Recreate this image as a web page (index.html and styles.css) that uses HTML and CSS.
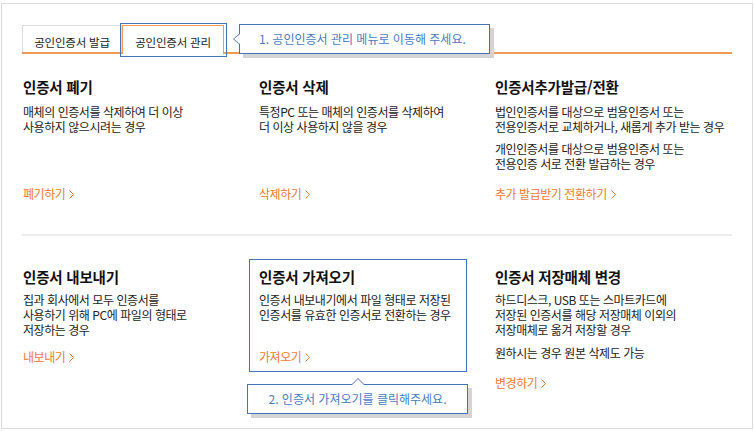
FILE: index.html
```html
<!DOCTYPE html>
<html lang="ko">
<head>
<meta charset="utf-8">
<title>공인인증서 관리</title>
<link rel="stylesheet" href="styles.css">
</head>
<body>
<div class="frame">
  <div class="tabs">
    <div class="tab tab-1">공인인증서 발급</div>
    <div class="tab tab-active">공인인증서 관리</div>
    <div class="callout callout-left">1. 공인인증서 관리 메뉴로 이동해 주세요.</div>
  </div>

  <div class="row row-1">
    <div class="card">
      <h3>인증서 폐기</h3>
      <p>매체의 인증서를 삭제하여 더 이상<br>사용하지 않으시려는 경우</p>
      <div class="link"><a href="#">폐기하기</a><svg width="5" height="9" viewBox="0 0 5 9"><polyline points="0.5,0.5 4.5,4.5 0.5,8.5" fill="none" stroke="#ee7a2f" stroke-width="1"/></svg></div>
    </div>
    <div class="card">
      <h3>인증서 삭제</h3>
      <p>특정PC 또는 매체의 인증서를 삭제하여<br>더 이상 사용하지 않을 경우</p>
      <div class="link"><a href="#">삭제하기</a><svg width="5" height="9" viewBox="0 0 5 9"><polyline points="0.5,0.5 4.5,4.5 0.5,8.5" fill="none" stroke="#ee7a2f" stroke-width="1"/></svg></div>
    </div>
    <div class="card">
      <h3>인증서추가발급/전환</h3>
      <p>법인인증서를 대상으로 범용인증서 또는<br>전용인증서로 교체하거나, 새롭게 추가 받는 경우</p>
      <p>개인인증서를 대상으로 범용인증서 또는<br>전용인증 서로 전환 발급하는 경우</p>
      <div class="link"><a href="#">추가 발급받기 전환하기</a><svg width="5" height="9" viewBox="0 0 5 9"><polyline points="0.5,0.5 4.5,4.5 0.5,8.5" fill="none" stroke="#ee7a2f" stroke-width="1"/></svg></div>
    </div>
  </div>

  <div class="divider"></div>

  <div class="row row-2">
    <div class="card card-fixed">
      <h3>인증서 내보내기</h3>
      <p>집과 회사에서 모두 인증서를<br>사용하기 위해 PC에 파일의 형태로<br>저장하는 경우</p>
      <div class="link link-tight"><a href="#">내보내기</a><svg width="5" height="9" viewBox="0 0 5 9"><polyline points="0.5,0.5 4.5,4.5 0.5,8.5" fill="none" stroke="#ee7a2f" stroke-width="1"/></svg></div>
    </div>
    <div class="card card-fixed card-highlight">
      <h3>인증서 가져오기</h3>
      <p>인증서 내보내기에서 파일 형태로 저장된<br>인증서를 유효한 인증서로 전환하는 경우</p>
      <div class="link link-tight"><a href="#">가져오기</a><svg width="5" height="9" viewBox="0 0 5 9"><polyline points="0.5,0.5 4.5,4.5 0.5,8.5" fill="none" stroke="#ee7a2f" stroke-width="1"/></svg></div>
      <div class="callout callout-up">2. 인증서 가져오기를 클릭해주세요.</div>
    </div>
    <div class="card">
      <h3>인증서 저장매체 변경</h3>
      <p>하드디스크, USB 또는 스마트카드에<br>저장된 인증서를 해당 저장매체 이외의<br>저장매체로 옮겨 저장할 경우</p>
      <p>원하시는 경우 원본 삭제도 가능</p>
      <div class="link"><a href="#">변경하기</a><svg width="5" height="9" viewBox="0 0 5 9"><polyline points="0.5,0.5 4.5,4.5 0.5,8.5" fill="none" stroke="#ee7a2f" stroke-width="1"/></svg></div>
    </div>
  </div>
</div>
</body>
</html>
```
FILE: styles.css
```css
* { box-sizing: border-box; }
html, body { margin: 0; padding: 0; background: #fff; }
body {
  font-family: "Noto Sans CJK KR", "Malgun Gothic", sans-serif;
  color: #222;
}
.frame {
  margin: 3px 1px 0 1px;
  height: 426px;
  border: 1px solid #dadada;
  padding: 21px 20px 0 20px;
}
.tabs {
  position: relative;
  display: flex;
  align-items: flex-end;
  height: 29px;
  border-bottom: 2px solid #f09a55;
}
.tab {
  height: 27px;
  border: 1px solid #dcdcdc;
  border-bottom: 0;
  padding-top: 9px;
  line-height: 15px;
  text-align: center;
  font-size: 11.5px;
  letter-spacing: -0.2px;
  color: #222;
  background: #fff;
}
.tab-1 { width: 100px; }
.tab-active {
  position: relative;
  width: 102px;
  height: 29px;
  margin-bottom: -2px;
  border-color: #f09a55;
}
.tab-active::after {
  content: "";
  position: absolute;
  left: -3px;
  right: -4px;
  top: -3px;
  bottom: -3px;
  border: 1px solid #4472b8;
}
.callout {
  position: absolute;
  height: 30px;
  border: 1px solid #4472b8;
  background: #fff;
  box-shadow: 4px 4px 0 #d4d4d4;
  color: #4a7bc0;
  font-size: 12px;
  line-height: 27px;
  letter-spacing: 0;
  white-space: nowrap;
}
.callout::before, .callout::after {
  content: "";
  position: absolute;
  width: 0;
  height: 0;
  border-style: solid;
}
.callout-left {
  left: 217px;
  top: -1px;
  width: 251px;
  padding-left: 19px;
}
.callout-left::before {
  left: -7px;
  top: calc(50% - 6px);
  border-width: 6px 7px 6px 0;
  border-color: transparent #4472b8 transparent transparent;
}
.callout-left::after {
  left: -6px;
  top: calc(50% - 5px);
  border-width: 5px 6px 5px 0;
  border-color: transparent #fff transparent transparent;
}
.callout-up {
  left: -11px;
  top: 117px;
  width: 221px;
  text-align: center;
}
.callout-up::before {
  left: calc(50% - 7px);
  top: -7px;
  border-width: 0 7px 7px 7px;
  border-color: transparent transparent #4472b8 transparent;
}
.callout-up::after {
  left: calc(50% - 6px);
  top: -6px;
  border-width: 0 6px 6px 6px;
  border-color: transparent transparent #fff transparent;
}
.row {
  display: grid;
  grid-template-columns: repeat(3, 236px);
}
.row-1 { padding: 23px 0 33px; }
.row-2 { padding-top: 31px; align-items: start; }
.divider { height: 2px; background: #ececec; }
.card {
  position: relative;
  display: flex;
  flex-direction: column;
  padding-left: 1px;
}
.card h3 {
  margin: 0 0 7px;
  font-size: 14.5px;
  line-height: 20px;
  font-weight: 700;
  color: #111;
  letter-spacing: -0.2px;
}
.row-2 .card h3 { margin-bottom: 5px; }
.card p {
  margin: 0;
  font-size: 12px;
  line-height: 15px;
  letter-spacing: -0.45px;
  white-space: nowrap;
  color: #222;
}
.card p + p { margin-top: 7px; }
.row-2 .card p + p { margin-top: 8px; }
.card-fixed { min-height: 97px; }
.card-highlight::after {
  content: "";
  position: absolute;
  left: -9px;
  top: -8px;
  bottom: -8px;
  width: 216px;
  border: 1px solid #4472b8;
  pointer-events: none;
}
.link {
  margin-top: auto;
  padding-top: 15px;
  display: flex;
  align-items: center;
  gap: 4px;
  font-size: 12px;
  line-height: 15px;
  letter-spacing: -0.45px;
}
.link-tight { padding-top: 12px; }
.link a { color: #ee7a2f; text-decoration: none; }
.link svg { display: block; margin-top: 1px; }
```
